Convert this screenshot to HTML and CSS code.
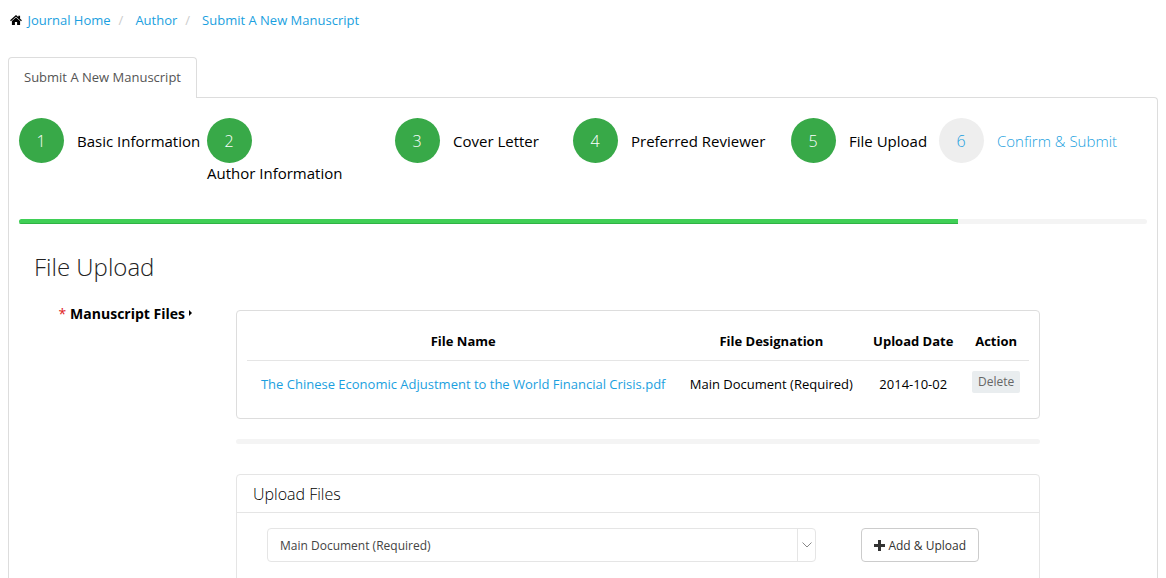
FILE: index.html
```html
<!DOCTYPE html>
<html lang="en">
<head>
<meta charset="utf-8">
<meta name="viewport" content="width=device-width, initial-scale=1">
<title>Submit A New Manuscript</title>
<link rel="stylesheet" href="styles.css">
</head>
<body>
<nav aria-label="Breadcrumb">
  <ol class="breadcrumb">
    <li>
      <svg class="home-icon" viewBox="0 0 13 11" aria-hidden="true"><path d="M6.5 0 9 2.200V.8h2v3.200l2 1.900-.9.900L6.500 1.900.9 6.800 0 5.900z"/><path d="M6.500 2.700 11 6.700v4.300H7.700V7.600H5.300V11H2V6.700z"/></svg>
      <a href="#">Journal Home</a>
    </li>
    <li><a href="#">Author</a></li>
    <li><a href="#">Submit A New Manuscript</a></li>
  </ol>
</nav>

<div class="tabs"><a class="tab" href="#submit">Submit A New Manuscript</a></div>

<main class="panel" id="submit">
  <ol class="steps">
    <li><a class="step done" href="#"><span class="number">1</span><span>Basic Information</span></a></li>
    <li><a class="step done" href="#"><span class="number">2</span><span>Author Information</span></a></li>
    <li><a class="step done" href="#"><span class="number">3</span><span>Cover Letter</span></a></li>
    <li><a class="step done" href="#"><span class="number">4</span><span>Preferred Reviewer</span></a></li>
    <li><a class="step done" href="#"><span class="number">5</span><span>File Upload</span></a></li>
    <li><a class="step" href="#"><span class="number">6</span><span>Confirm &amp; Submit</span></a></li>
  </ol>
  <div class="progress"><div class="bar" style="width: 83.25%"></div></div>

  <h1 class="title">File Upload</h1>

  <div class="form-row">
    <div class="form-label"><span class="required">*</span> Manuscript Files<span class="caret"></span></div>
    <div class="form-content">
      <section class="box files">
        <table>
          <thead>
            <tr><th class="col-name">File Name</th><th class="col-type">File Designation</th><th class="col-date">Upload Date</th><th class="col-action">Action</th></tr>
          </thead>
          <tbody>
            <tr>
              <td><a href="#">The Chinese Economic Adjustment to the World Financial Crisis.pdf</a></td>
              <td>Main Document (Required)</td>
              <td>2014-10-02</td>
              <td class="action"><button class="delete" type="button">Delete</button></td>
            </tr>
          </tbody>
        </table>
      </section>
      <div class="progress upload-progress"></div>
      <section class="box upload">
        <h2 class="upload-title">Upload Files</h2>
        <div class="upload-form">
          <div class="select">
            <select aria-label="File designation"><option>Main Document (Required)</option></select>
            <span class="arrow"><svg viewBox="0 0 10 6" aria-hidden="true"><path d="M.5.500 5 5 9.500.5"/></svg></span>
          </div>
          <button class="add" type="button"><svg class="plus" viewBox="0 0 11 11" aria-hidden="true"><path d="M4 0h3v4h4v3H7v4H4V7H0V4h4z"/></svg>Add &amp; Upload</button>
        </div>
      </section>
    </div>
  </div>
</main>
</body>
</html>
```

FILE: styles.css
```css
* {
  box-sizing: border-box;
}

body {
  display: flex;
  flex-direction: column;
  min-height: 100vh;
  margin: 0;
  padding: 10px 8px 0;
  background: #fff;
  color: #000;
  font: 13px/20px "Open Sans", sans-serif;
}

a {
  color: #1b9fe0;
  text-decoration: none;
}

button,
select {
  font-family: inherit;
}

.breadcrumb {
  display: flex;
  margin: 0;
  padding: 0 2px;
  list-style: none;
}

.breadcrumb li + li::before {
  content: "/";
  padding: 0 12px 0 8px;
  color: #ccc;
}

.home-icon {
  width: 12px;
  height: 10px;
  margin-right: 2px;
}

.tabs {
  display: flex;
  margin-top: 27px;
}

.tab {
  z-index: 1;
  margin-bottom: -1px;
  padding: 9px 15px 11px;
  border: 1px solid #ddd;
  border-bottom: 0;
  border-radius: 4px 4px 0 0;
  background: #fff;
  color: #555;
}

.panel {
  flex: 1;
  padding: 20px 10px 0;
  border: 1px solid #ddd;
  border-bottom: 0;
  border-radius: 0 4px 0 0;
}

.steps {
  display: grid;
  grid-template-columns: 188fr 188fr 178fr 218fr 148fr 208fr;
  margin: 0;
  padding: 0;
  list-style: none;
}

.step {
  display: flex;
  flex-wrap: wrap;
  align-items: center;
  column-gap: 13px;
  font-size: 15px;
  font-weight: 300;
}

.step.done {
  color: #000;
  font-weight: 400;
}

.number {
  width: 45px;
  height: 45px;
  padding-right: 1px;
  border-radius: 50%;
  background: #eee;
  font-size: 16px;
  font-weight: 300;
  line-height: 46px;
  text-align: center;
}

.done .number {
  background: #38a948;
  color: #fff;
}

.progress {
  height: 5px;
  border-radius: 3px;
  background: #f4f4f4;
  overflow: hidden;
}

.steps + .progress {
  margin-top: 36px;
}

.bar {
  height: 100%;
  background: #3fcf56;
  box-shadow: inset 0 -1px #2fb344;
}

.title {
  margin: 25px 15px;
  color: #222;
  font-size: 24px;
  font-weight: 300;
  line-height: 36px;
}

.form-row {
  display: grid;
  grid-template-columns: 173fr 804fr;
  gap: 44px;
  padding-right: 107px;
}

.form-label {
  display: flex;
  align-items: center;
  justify-content: flex-end;
  gap: 4px;
  align-self: start;
  margin-top: -6px;
  font-size: 14px;
  font-weight: 700;
}

.required {
  color: #e02222;
  font-weight: 400;
}

.caret {
  margin-bottom: 3px;
  border: 3px solid transparent;
  border-left: 3px solid #000;
  border-right: 0;
}

.box {
  border: 1px solid #ddd;
  border-radius: 4px;
}

.files {
  padding: 10px 10px 20px;
}

table {
  width: 100%;
  border-collapse: collapse;
  table-layout: fixed;
  text-align: center;
  white-space: nowrap;
}

th,
td {
  padding: 0;
}

th {
  height: 39px;
  padding-top: 2px;
  border-bottom: 1px solid #e5e5e5;
}

td {
  height: 38px;
  padding-top: 10px;
}

td.action {
  padding-top: 6px;
}

.col-name {
  width: 55.3%;
}

.col-type {
  width: 23.5%;
}

.col-date {
  width: 12.8%;
}

.col-action {
  width: 8.4%;
}

.delete {
  padding: 2px 6px;
  border: 0;
  border-radius: 2px;
  background: #e9edef;
  color: #666;
  font-size: 12px;
  line-height: 18px;
}

.upload-progress {
  margin: 20px 0 30px;
}

.upload {
  border-color: #e5e5e5;
}

.upload-title {
  margin: 0;
  padding: 9px 16px 8px;
  border-bottom: 1px solid #e5e5e5;
  font-size: 16px;
  font-weight: 300;
  line-height: 20px;
}

.upload-form {
  display: flex;
  gap: 45px;
  padding: 15px 60px 30px 30px;
}

.select {
  position: relative;
  flex: 1;
}

select {
  width: 100%;
  height: 34px;
  padding: 0 12px;
  border: 1px solid #e5e5e5;
  border-radius: 4px;
  appearance: none;
  background: #fff;
  color: #444;
  font-size: 12px;
}

.arrow {
  position: absolute;
  top: 1px;
  right: 1px;
  bottom: 1px;
  display: grid;
  place-items: center;
  width: 18px;
  border-left: 1px solid #e5e5e5;
  pointer-events: none;
}

.arrow svg {
  width: 10px;
  height: 6px;
  fill: none;
  stroke: #888;
}

.add {
  display: flex;
  align-items: center;
  gap: 3px;
  height: 34px;
  padding: 0 12px;
  border: 1px solid #ccc;
  border-radius: 4px;
  background: #fff;
  color: #333;
  font-size: 12px;
}

.plus {
  width: 11px;
  height: 11px;
  fill: #333;
}
```
